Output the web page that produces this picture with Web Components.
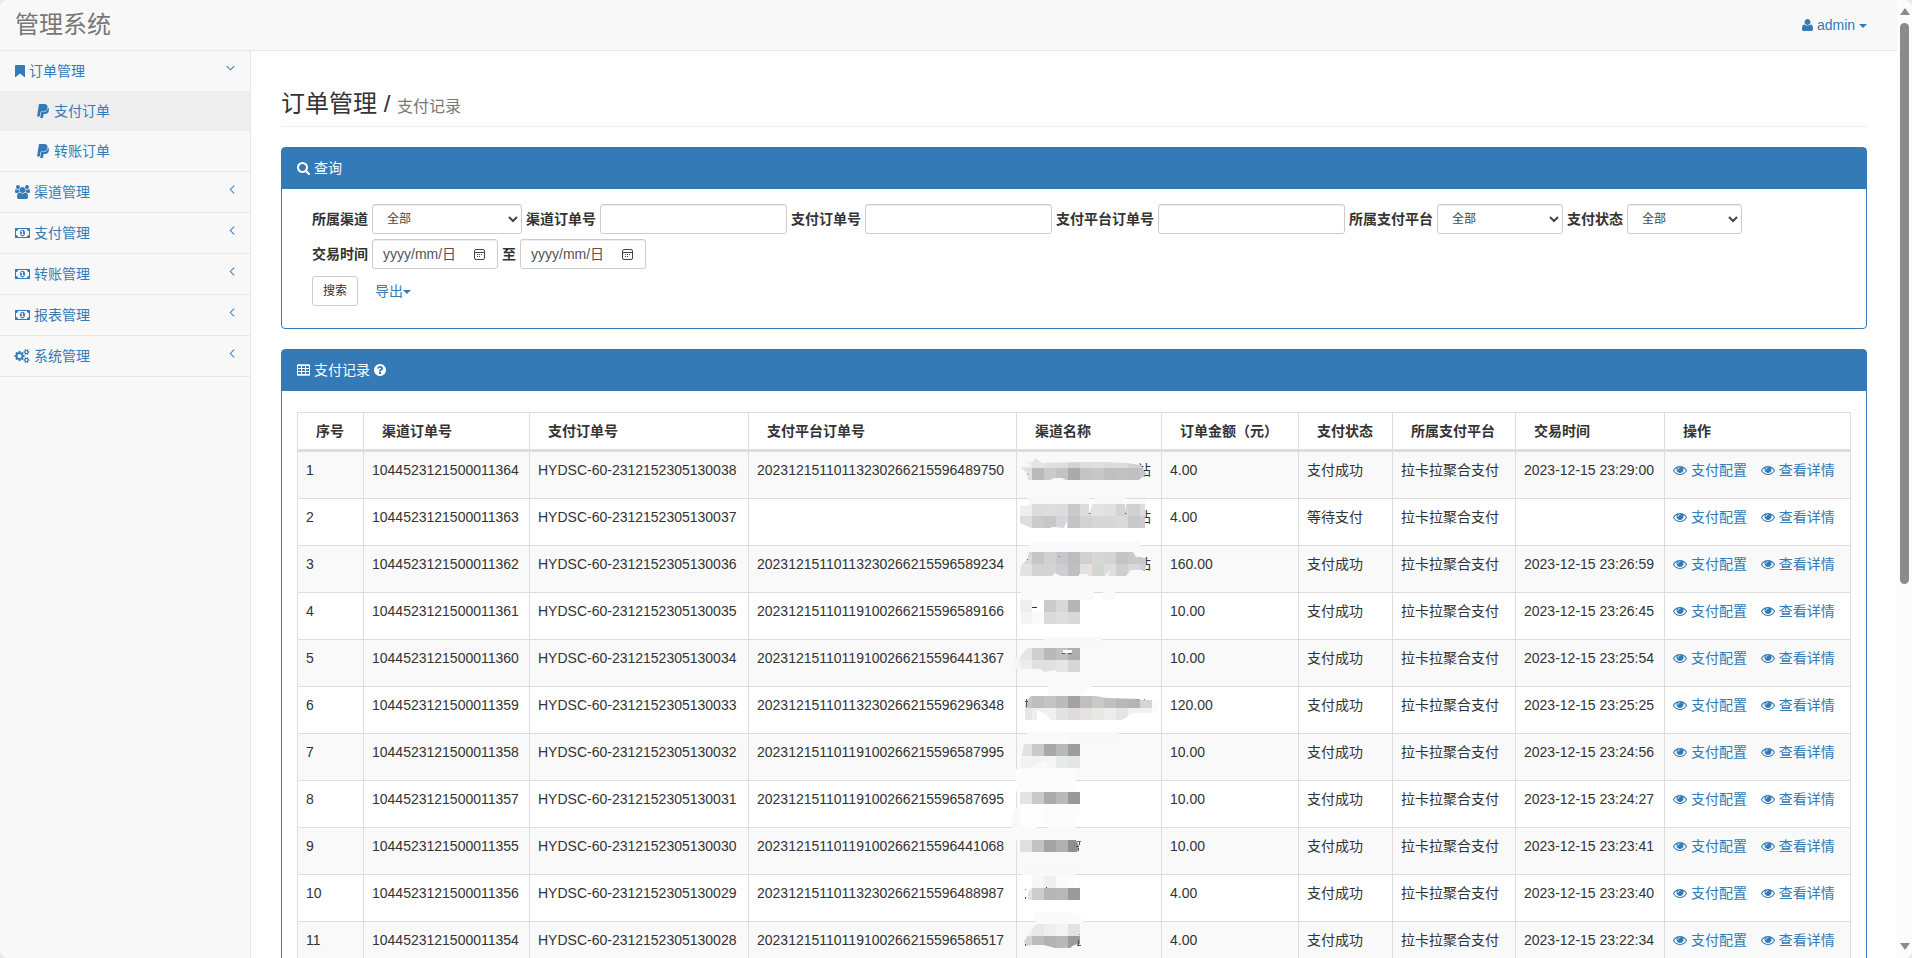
<!DOCTYPE html>
<html lang="zh-CN">
<head>
<meta charset="utf-8">
<title>管理系统</title>
<style>
html, body { margin: 0; height: 100%; }
body {
  background: #e9e9e9; color: #333;
  font: 14px/20px "Liberation Sans", "Noto Sans CJK SC", sans-serif;
}
</style>
</head>
<body>
<app-shell>
  <top-bar slot="top" brand="管理系统" user="admin"></top-bar>
  <side-nav slot="side"></side-nav>
  <page-heading section="订单管理" page="支付记录"></page-heading>
  <panel-box>
    <span slot="title"><fa-icon name="search"></fa-icon> 查询</span>
    <search-form></search-form>
  </panel-box>
  <panel-box>
    <span slot="title"><fa-icon name="table"></fa-icon> 支付记录 <fa-icon name="question"></fa-icon></span>
    <order-table></order-table>
  </panel-box>
  <scroll-rail slot="rail"></scroll-rail>
</app-shell>

<script>
const define = (name, render) => customElements.define(name, class extends HTMLElement {
  constructor() { super(); this.attachShadow({ mode: 'open' }); }
  connectedCallback() { this.shadowRoot.innerHTML = render(this); }
});

/* Icons: [width in units, path]; 1792 units are one 14px em. */
const ICONS = {
  bookmark: [1280, 'M0 256q0-80 80-128h1120q80 48 80 128v1380q0 60-90 40L640 1230 90 1676q-90 20-90-40z'],
  paypal: [1664, 'M1519 646q18 84-4 204-87 444-565 444h-44q-25 0-44 16.5t-24 42.5l-4 19-55 346-2 15q-5 26-24.5 42.5t-44.5 16.5h-251q-21 0-33-15t-9-36q9-56 26.5-168t26.5-168 27-167.5 27-167.5q5-37 43-37h131q133 2 236-21 175-39 287-144 102-95 155-246 24-70 35-133 1-6 2.5-7.5t3.5-1 6 3.500q79 59 98 162zm-172-282q0 107-46 236-80 233-302 315-113 40-252 42 0 1-90 1l-90-1q-100 0-118 96-2 8-85 530-1 10-12 10h-295q-22 0-36.5-16.5t-11.5-38.5l232-1471q5-29 27.5-48t51.5-19h598q34 0 97.5 13t111.5 32q107 41 163.5 123t56.5 196z'],
  users: [1920, 'M593 896q-162 5-265 128h-134q-82 0-138-40.5t-56-118.5q0-353 124-353 6 0 43.5 21t97.5 42.5 119 21.5q67 0 133-23-5 37-5 66 0 139 81 256zm1071 637q0 120-73 189.5t-194 69.5h-874q-121 0-194-69.5t-73-189.5q0-53 3.5-103.5t14-109 26.5-108.5 43-97.5 62-81 85.5-53.5 111.5-20q10 0 43 21.5t73 48 107 48 135 21.5 135-21.5 107-48 73-48 43-21.5q61 0 111.5 20t85.5 53.5 62 81 43 97.5 26.5 108.5 14 109 3.5 103.5zm-1024-1277q0 106-75 181t-181 75-181-75-75-181 75-181 181-75 181 75 75 181zm704 384q0 159-112.5 271.5t-271.5 112.5-271.5-112.5-112.5-271.5 112.5-271.5 271.5-112.5 271.5 112.5 112.5 271.5zm576 225q0 78-56 118.5t-138 40.5h-134q-103-123-265-128 81-117 81-256 0-29-5-66 66 23 133 23 59 0 119-21.5t97.5-42.5 43.5-21q124 0 124 353zm-128-609q0 106-75 181t-181 75-181-75-75-181 75-181 181-75 181 75 75 181z'],
  money: [1920, 'M768 1152h384v-96h-128v-448h-114l-148 137 77 80q42-37 55-57h2v288h-128v96zm512-256q0 70-21 142t-59.5 134-101.5 101-138 39-138-39-101.5-101-59.5-134-21-142 21-142 59.5-134 101.5-101 138-39 138 39 101.5 101 59.5 134 21 142zm512 256v-512q-106 0-181-75t-75-181h-1152q0 106-75 181t-181 75v512q106 0 181 75t75 181h1152q0-106 75-181t181-75zm128-832v1152q0 26-19 45t-45 19h-1792q-26 0-45-19t-19-45v-1152q0-26 19-45t45-19h1792q26 0 45 19t19 45z'],
  cogs: [1920, 'M832 896q0-106-75-181t-181-75-181 75-75 181 75 181 181 75 181-75 75-181zm768 512q0-52-38-90t-90-38-90 38-38 90q0 53 37.5 90.5t90.5 37.5 90.5-37.5 37.5-90.5zm0-1024q0-52-38-90t-90-38-90 38-38 90q0 53 37.5 90.5t90.5 37.5 90.5-37.5 37.5-90.5zm-384 421v185q0 10-7 19.5t-16 10.5l-155 24q-11 35-32 76 34 48 90 115 7 11 7 20 0 12-7 19-23 30-82.5 89.5t-78.5 59.5q-11 0-21-7l-115-90q-37 19-77 31-11 108-23 155-7 24-30 24h-186q-11 0-20-7.5t-10-17.5l-23-153q-34-10-75-31l-118 89q-7 7-20 7-11 0-21-8-144-133-144-160 0-9 7-19 10-14 41-53t47-61q-23-44-35-82l-152-24q-10-1-17-9.5t-7-19.5v-185q0-10 7-19.5t16-10.5l155-24q11-35 32-76-34-48-90-115-7-11-7-20 0-12 7-20 22-30 82-89t79-59q11 0 21 7l115 90q34-18 77-32 11-108 23-154 7-24 30-24h186q11 0 20 7.5t10 17.5l23 153q34 10 75 31l118-89q8-7 20-7 11 0 21 8 144 133 144 160 0 8-7 19-12 16-42 54t-45 60q23 48 34 82l152 23q10 2 17 10.5t7 19.5zm640 533v140q0 16-149 31-12 27-30 52 51 113 51 138 0 4-4 7-122 71-124 71-8 0-46-47t-52-68q-20 2-30 2t-30-2q-14 21-52 68t-46 47q-2 0-124-71-4-3-4-7 0-25 51-138-18-25-30-52-149-15-149-31v-140q0-16 149-31 13-29 30-52-51-113-51-138 0-4 4-7 4-2 35-20t59-34 30-16q8 0 46 46.5t52 67.5q20-2 30-2t30 2q51-71 92-112l6-2q4 0 124 70 4 3 4 7 0 25-51 138 17 23 30 52 149 15 149 31zm0-1024v140q0 16-149 31-12 27-30 52 51 113 51 138 0 4-4 7-122 71-124 71-8 0-46-47t-52-68q-20 2-30 2t-30-2q-14 21-52 68t-46 47q-2 0-124-71-4-3-4-7 0-25 51-138-18-25-30-52-149-15-149-31v-140q0-16 149-31 13-29 30-52-51-113-51-138 0-4 4-7 4-2 35-20t59-34 30-16q8 0 46 46.5t52 67.5q20-2 30-2t30 2q51-71 92-112l6-2q4 0 124 70 4 3 4 7 0 25-51 138 17 23 30 52 149 15 149 31z'],
  search: [1664, 'M1152 832q0-185-131.5-316.5t-316.5-131.5-316.5 131.5-131.5 316.5 131.5 316.5 316.5 131.5 316.5-131.5 131.5-316.5zm512 832q0 52-38 90t-90 38q-54 0-90-38l-343-342q-179 124-399 124-143 0-273.5-55.5t-225-150-150-225-55.5-273.5 55.5-273.5 150-225 225-150 273.5-55.5 273.5 55.5 225 150 150 225 55.5 273.5q0 220-124 399l343 343q37 37 37 90z'],
  table: [1664, 'M0 256q0-90 90-90h1484q90 0 90 90v1280q0 90-90 90H90q-90 0-90-90zM128 384v256h384V384zM640 384v256h384V384zM1152 384v256h384V384zM128 768v256h384V768zM640 768v256h384V768zM1152 768v256h384V768zM128 1152v256h384v-256zM640 1152v256h384v-256zM1152 1152v256h384v-256z'],
  question: [1536, 'M896 1376v-192q0-14-9-23t-23-9h-192q-14 0-23 9t-9 23v192q0 14 9 23t23 9h192q14 0 23-9t9-23zm256-672q0-88-55.5-163t-138.5-116-170-41q-243 0-371 213-15 24 8 42l132 100q7 6 19 6 16 0 25-12 53-68 86-92 34-24 86-24 48 0 85.5 26t37.5 59q0 38-20 61t-68 45q-63 28-115.5 86.5t-52.5 125.5v36q0 14 9 23t23 9h192q14 0 23-9t9-23q0-19 21.5-49.5t54.5-49.5q32-18 49-28.5t46-35 44.5-48 28-60.5 12.5-81zm384 192q0 209-103 385.5t-279.5 279.5-385.5 103-385.5-103-279.5-279.5-103-385.5 103-385.5 279.5-279.5 385.5-103 385.5 103 279.5 279.5 103 385.5z'],
  user: [1408, 'M1408 1399q0 109-62.5 187t-150.5 78h-982q-88 0-150.5-78t-62.5-187q0-85 8.5-160.5t31.5-152 58.5-131 94-89 134.5-34.5q131 128 377 128t377-128q76 0 134.5 34.5t94 89 58.5 131 31.5 152 8.500 160.5zM1088 512q0 159-112.5 271.5t-271.5 112.5-271.5-112.5-112.5-271.5 112.5-271.5 271.5-112.5 271.5 112.5 112.5 271.5z'],
  eye: [1792, 'M1664 960q-152-236-381-353 61 104 61 225 0 185-131.5 316.5t-316.5 131.5-316.5-131.5-131.5-316.5q0-121 61-225-229 117-381 353 133 205 333.5 326.5t434.5 121.5 434.5-121.5 333.5-326.5zm-720-384q0-20-14-34t-34-14q-125 0-214.5 89.5t-89.5 214.5q0 20 14 34t34 14 34-14 14-34q0-86 61-147t147-61q20 0 34-14t14-34zm848 384q0 34-20 69-140 230-376.5 368.5t-499.5 138.5-499.5-139-376.5-368q-20-35-20-69t20-69q140-229 376.5-368t499.5-139 499.5 139 376.5 368q20 35 20 69z'],
  left: [1152, 'M1090 500L620 960l470 460-85 85L460 960 1005 415z'],
  down: [1152, 'M1100 700L576 1230 52 700l90-90 434 440 434-440z'],
};

define('fa-icon', el => {
  const [w, d] = ICONS[el.getAttribute('name')];
  return `<style>
    :host { display: inline-block; height: 14px; line-height: 0; vertical-align: -2px; }
    svg { display: block; height: 14px; fill: currentColor; fill-rule: evenodd; overflow: visible; }
    .solid { fill-rule: nonzero; }
  </style><svg width="${w / 128}" viewBox="0 0 ${w} 1792" aria-hidden="true"${el.getAttribute('name') === 'user' ? ' class="solid"' : ''}><path d="${d}"/></svg>`;
});

define('app-shell', () => `<style>
  :host { display: grid; grid-template: auto minmax(0, 1fr) / 251px minmax(0, 1fr) 15px;
    height: 100vh; overflow: hidden; background: #f8f8f8; border-radius: 8px; }
  .top { grid-column: 1 / 3; }
  .rail { grid-column: 3; grid-row: 1 / 3; }
  nav { border-right: 1px solid #e7e7e7; }
  main { background: #fff; padding: 0 30px; overflow: hidden; }
</style>
<header class="top"><slot name="top"></slot></header>
<nav><slot name="side"></slot></nav>
<main><slot></slot></main>
<div class="rail"><slot name="rail"></slot></div>`);

define('top-bar', el => `<style>
  :host { display: flex; justify-content: space-between; align-items: flex-start; height: 50px;
    padding: 0 30px 0 15px; border-bottom: 1px solid #e7e7e7; background: #f8f8f8; }
  a { text-decoration: none; color: #337ab7; padding: 15px 0; }
  .brand { color: #777; font-size: 24px; line-height: 20px; }
  .caret { display: inline-block; border: 4px solid transparent; border-top-color: currentColor; border-bottom: 0; vertical-align: middle; }
</style>
<a class="brand" href="#">${el.getAttribute('brand')}</a>
<a href="#"><fa-icon name="user"></fa-icon> ${el.getAttribute('user')} <span class="caret"></span></a>`);

define('nav-item', el => {
  const level = el.getAttribute('level');
  const arrow = el.getAttribute('arrow');
  return `<style>
    :host { display: block; }
    a { display: flex; gap: 4px; padding: 10px 15px; color: #337ab7; text-decoration: none; }
    a.sub { padding-left: 37px; }
    a.active { background: #eee; }
    .icon { display: flex; align-items: center; }
    .arrow { margin-left: auto; line-height: 14px; }
  </style>
  <a href="#" class="${level === '2' ? 'sub' : ''} ${el.hasAttribute('active') ? 'active' : ''}">
    <span class="icon"><fa-icon name="${el.getAttribute('icon')}"></fa-icon></span><slot></slot>
    ${arrow ? `<span class="arrow"><fa-icon name="${arrow}"></fa-icon></span>` : ''}
  </a>`;
});

define('side-nav', () => `<style>
  :host { display: block; }
  ul { list-style: none; margin: 0; padding: 0; }
  .top > li { border-bottom: 1px solid #e7e7e7; }
</style>
<ul class="top">
  <li><nav-item icon="bookmark" arrow="down">订单管理</nav-item>
    <ul>
      <li><nav-item icon="paypal" level="2" active>支付订单</nav-item></li>
      <li><nav-item icon="paypal" level="2">转账订单</nav-item></li>
    </ul></li>
  <li><nav-item icon="users" arrow="left">渠道管理</nav-item></li>
  <li><nav-item icon="money" arrow="left">支付管理</nav-item></li>
  <li><nav-item icon="money" arrow="left">转账管理</nav-item></li>
  <li><nav-item icon="money" arrow="left">报表管理</nav-item></li>
  <li><nav-item icon="cogs" arrow="left">系统管理</nav-item></li>
</ul>`);

define('page-heading', el => `<style>
  :host { display: block; }
  h1 { margin: 40px 0 20px; padding-bottom: 9px; border-bottom: 1px solid #eee;
    font-size: 24px; line-height: 26px; font-weight: 400; }
  small { font-size: 16px; line-height: 16px; color: #777; }
</style><h1>${el.getAttribute('section')} / <small>${el.getAttribute('page')}</small></h1>`);

define('panel-box', () => `<style>
  :host { display: block; margin-bottom: 20px; border: 1px solid #337ab7; border-radius: 4px; background: #fff; }
  header { padding: 10px 15px 11px; background: #337ab7; color: #fff; }
  .body { padding: 15px; }
</style><header><slot name="title"></slot></header><div class="body"><slot></slot></div>`);

define('search-form', () => `<style>
  :host { display: block; }
  form { padding: 0 15px 7px; }
  .row { display: flex; flex-wrap: wrap; align-items: center; gap: 4px; margin-bottom: 5px; }
  .actions { gap: 17px; margin: 7px 0 0; }
  label { font-weight: 700; }
  input, select, button { box-sizing: border-box; height: 30px; margin: 0; padding: 5px 10px; font: inherit;
    font-size: 12px; line-height: 18px; color: #555; background: #fff; border: 1px solid #ccc; border-radius: 3px; }
  input, select { box-shadow: inset 0 1px 1px rgba(0, 0, 0, .075); }
  input { width: 187px; }
  select { color: #444; }
  .channel { width: 150px; } .platform { width: 126px; } .state { width: 115px; }
  .date { position: relative; display: flex; }
  .date input { width: 126px; font-size: 14px; }
  .date input::placeholder { color: #555; opacity: 1; }
  .date svg { position: absolute; right: 13px; top: 10px; }
  button { color: #333; }
  a { color: #337ab7; text-decoration: none; }
  .caret { display: inline-block; border: 4px solid transparent; border-top-color: currentColor; border-bottom: 0; vertical-align: middle; }
</style>
<form>
  <div class="row">
    <label for="channel">所属渠道</label><select id="channel" class="channel"><option>全部</option></select>
    <label for="channelNo">渠道订单号</label><input id="channelNo" type="text">
    <label for="payNo">支付订单号</label><input id="payNo" type="text">
    <label for="platformNo">支付平台订单号</label><input id="platformNo" type="text">
    <label for="platform">所属支付平台</label><select id="platform" class="platform"><option>全部</option></select>
    <label for="state">支付状态</label><select id="state" class="state"><option>全部</option></select>
  </div>
  <div class="row">
    ${[['from', '交易时间'], ['to', '至']].map(([id, text]) => `<label for="${id}">${text}</label>
    <span class="date"><input id="${id}" type="text" placeholder="yyyy/mm/日">
      <svg width="11" height="11" viewBox="0 0 11 11" fill="none" stroke="#444" aria-hidden="true"><rect x=".5" y=".5" width="10" height="10" rx="1.500"/><path d="M1 3.500h9"/><path d="M3 5.500h1m1 0h1m1 0h1M3 7.500h1m1 0h1"/></svg></span>`).join('')}
  </div>
  <div class="row actions"><button type="button">搜索</button><a href="#">导出<span class="caret"></span></a></div>
</form>`);

/* Pixelated cover over a channel name. Coordinates are relative to the cell;
   each band is [x, y, height, colours], one 12px block per colour. */
const MASKS = [
  { clip: '3,15 14,14 9,9 16,10 18,6 24,10 26,11 66,10 88,10 110,11 124,13 128,20 130,22 124,26 122,28 49,28 45,26 37,26 33,28 11,28 11,22',
    bands: [[3, 6, 10, '#ededed #e4e4e4 #e0e0df #dcdddd #d2d2d3 #dedede #e0e0e0 #dcdcdc #dcdcdc #d0d2d3 #d2d2d2'], [3, 16, 12, '#e0e0e0 #bababa #c9cacc #c4c2c2 #a9aaac #c3c4c6 #c5c8c6 #bebfbf #c0c1c3 #c0c0c2 #c4c4c4']], dots: [[10, 22, '#777']] },
  { clip: '11,-1 72,-1 72,15 78,-1 108,-1 108,13 110,0 128,0 128,29 50,29 50,22 47,29 36,28 33,29 14,29 3,24 3,7 13,6',
    bands: [[3, -1, 6, '#f8f8f8 #f8f8f8 #f8f8f8 #f8f8f8 #f8f8f8 #f8f8f8 #f8f8f8 #f8f8f8 #f8f8f8 #f8f8f8 #f8f8f8'], [3, 5, 12, '#eee #dcdcdc #dfdddc #dadcdf #c9c9c9 #dcdcdc #e3e3e3 #dde1e3 #d4d4d4 #cfd2d2 #ddd'], [3, 17, 12, '#dedede #c9cbcd #c9c7c6 #d6d6d8 #c3c4c6 #d2d4d2 #d6d8d6 #d6d8d6 #dadada #c9c9cb #ccc']], dots: [[72, 14, '#444'], [108, 14, '#444']] },
  { clip: '13,-5 77,-5 77,1 78,-5 124,-5 121,6 116,6 119,11 129,12 129,24 114,24 109,30 91,30 93,24 88,30 72,30 71,28 62,28 62,30 44,30 38,27 35,30 3,30 4,20 11,12',
    bands: [[3, -5, 11, '#fafafa #fafafa #fafafa #fafafa #fafafa #fafafa #fafafa #fafafa #fafafa #fafafa #fafafa'], [3, 6, 12, '#d9d9d9 #c6c6c8 #d2d1cf #c5c8cb #bdbdbf #d3cfcf #d6d8d4 #d2d4d6 #c4c4c6 #c9c9cb #c6c8ca'], [3, 18, 12, '#e2e2e0 #d2d2d2 #d4d2d2 #ceced0 #bfbfc1 #e4e0e0 #d3d7d3 #dcdee0 #cfcfcf #d6d8da #cfcfd1']], dots: [[42, 10, '#46718f'], [10, 13, '#666']] },
  { clip: '5,-5 77,-5 77,7 63,7 63,31 4,31 3,7', bands: [[3, -5, 12, '#fafafa #fafafa #fafafa #fafafa #fafafa #fafafa #fafafa'], [3, 7, 12, '#efeeec #fff #c9cbce #d8d8d8 #b5b5b5'], [3, 19, 12, '#f4f4f4 #fafafa #dadada #dedee0 #d9d9d9']], dots: [[15, 14, '#333', 5], [86, -5, '#fafafa', 12, 12]] },
  { clip: '24,-3 86,-3 83,6 63,8 63,32 40,32 38,30 27,32 24,29 -4,29 -3,18 3,17 9,9', bands: [[27, -4, 12, '#f8f8f8 #f8f8f8 #f8f8f8 #f8f8f8 #f8f8f8'], [-9, 17, 12, '#f5f5f5'], [3, 8, 12, '#e6e6e4 #cfcfcf #b8b9bb #c0c0be #adafad'], [3, 20, 12, '#ededed #e0e0e0 #e0e2e2 #e6e6e6 #d4d8d6']], dots: [[46, 10, '#fafafa', 9, 3], [45, 13, '#555', 3], [51, 13, '#555', 4]] },
  { clip: '31,-2 76,-2 63,9 78,9 90,11 123,12 123,13 135,13 142,16 139,26 116,26 105,33 33,33 30,28 20,23 20,33 8,33 8,21 9,15 14,9 31,9', bands: [[27, -3, 12, '#fafafa #fafafa #fafafa #fafafa'], [3, 9, 12, '#c6c6c6 #bebebe #c6c4c2 #b8babc #a2a2a2 #c2bebe #c8cac8 #c0c0c2 #b8b8ba #b3b5b3 #d4d5d7 #fafafa'], [3, 21, 12, '#e6e6e6 #eee #eef1f0 #e2e2e2 #dcdcdc #e6e2e2 #e8e8e6 #ececec #e4e4e4 #f1f1f1 #f1f1f1 #fafafa']], dots: [[8, 14, '#555', 3], [9, 12, '#555', 1, 8], [120, 12, '#777'], [127, 12, '#777'], [81, 24, '#f3edab']] },
  { clip: '11,-2 102,-2 98,9 63,10 63,34 34,34 28,26 18,31 15,34 3,34 5,20 7,10', bands: [[3, -2, 12, '#fafafa #fafafa #fafafa #fafafa #f8f8f8 #f8f8f8 #f8f8f8 #f8f8f8 #f8f8f8'], [3, 10, 12, '#e2e2e0 #cbcac8 #a8a8aa #b8b9bb #9d9d9d'], [3, 22, 12, '#f2f2f2 #f2f2f2 #f5f5f5 #e8eaea #e4e6e4']], dots: [] },
  { clip: '-1,-12 59,-12 59,11 63,11 63,23 62,36 58,47 31,47 20,34 20,47 -6,47 -4,30 3,24 3,11 -1,10', bands: [[-9, -12, 23, '#fcfcfc #fcfcfc #fcfcfc #fcfcfc #fcfcfc #fcfcfc'], [3, 11, 12, '#e4e4e2 #cac9c7 #a9abad #b8b9bb #97989a'], [-9, 23, 24, '#f9f9f9 #fdfdfd #fdfdfd #fbfbfb #fbfbfb #fcfcfc']], dots: [] },
  { clip: '-3,0 3,0 3,12 59,12 62,18 60,24 3,24 -2,16', bands: [[-9, 0, 12, '#fafafa'], [3, 12, 12, '#dfdfdd #c4c2c1 #a1a3a5 #b0b0b0 #8f8f91']], dots: [[60, 13, '#57708a', 4], [62, 14, '#555', 1, 3], [59, 18, '#555', 3], [61, 20, '#555', 1, 3]] },
  { clip: '5,-11 59,-11 56,13 63,13 63,25 11,25 11,17 15,13 15,0 5,0', bands: [[3, -11, 12, '#f8f8f8 #f8f8f8 #f8f8f8 #f8f8f8 #f8f8f8'], [15, 1, 12, '#f7f7f7 #edf0f0 #fafafa #fcfcfc'], [3, 13, 12, '#e4e4e2 #cecdcc #b4b6b8 #b8b8b8 #9a9a9a']], dots: [[8, 14, '#777'], [8, 22, '#555', 1, 2], [29, 12, '#333']] },
  { clip: '16,-10 50,-10 68,-2 63,2 63,22 57,23 53,26 38,26 27,23 15,23 10,24 7,20 13,9 20,2', bands: [[15, -10, 12, '#fafafa #fafafa #fafafa #fafafa #fafafa'], [3, 2, 12, '#f0f0f0 #e8e8e8 #eee #f4f4f2 #e0e4e4'], [3, 14, 12, '#d4d4d4 #bcbcbc #b2b2b2 #b8b8b8 #9c9c9e']], dots: [[8, 22, '#555', 1, 2], [62, 12, '#7aa5d0'], [61, 18, '#456', 1, 5], [60, 23, '#555', 4]] },
];

define('masked-name', el => {
  const i = +el.getAttribute('row'), m = MASKS[i];
  const blocks = m.bands.map(([x, y, h, c]) => c.split(' ').map((f, n) =>
    `<rect x="${x + n * 12}" y="${y}" width="12" height="${h}" fill="${f}"/>`).join('')).join('');
  const dots = m.dots.map(([x, y, f, w = 1, h = 1]) => `<rect x="${x}" y="${y}" width="${w}" height="${h}" fill="${f}"/>`).join('');
  return `<style>
    :host { display: block; padding-left: 112px; height: 20px; }
    svg { position: absolute; left: 0; top: 0; overflow: visible; }
  </style><slot></slot><svg width="144" height="46" shape-rendering="crispEdges" aria-hidden="true">
  <clipPath id="c"><polygon points="${m.clip}"/></clipPath><g clip-path="url(#c)">${blocks}</g>${dots}</svg>`;
});

const ORDERS = [
  ['1044523121500011364', '38', '20231215110113230266215596489750', '4.00', '23:29:00'],
  ['1044523121500011363', '37', '', '4.00', ''],
  ['1044523121500011362', '36', '20231215110113230266215596589234', '160.00', '23:26:59'],
  ['1044523121500011361', '35', '20231215110119100266215596589166', '10.00', '23:26:45'],
  ['1044523121500011360', '34', '20231215110119100266215596441367', '10.00', '23:25:54'],
  ['1044523121500011359', '33', '20231215110113230266215596296348', '120.00', '23:25:25'],
  ['1044523121500011358', '32', '20231215110119100266215596587995', '10.00', '23:24:56'],
  ['1044523121500011357', '31', '20231215110119100266215596587695', '10.00', '23:24:27'],
  ['1044523121500011355', '30', '20231215110119100266215596441068', '10.00', '23:23:41'],
  ['1044523121500011356', '29', '20231215110113230266215596488987', '4.00', '23:23:40'],
  ['1044523121500011354', '28', '20231215110119100266215596586517', '4.00', '23:22:34'],
];

define('order-table', () => `<style>
  :host { display: block; padding-top: 6px; }
  table { width: 100%; table-layout: fixed; border-collapse: separate; border-spacing: 0;
    border: solid #ddd; border-width: 1px 0 0 1px; }
  th, td { position: relative; text-align: left; vertical-align: top; white-space: nowrap;
    border: solid #ddd; border-width: 0 1px 1px 0; }
  th { padding: 8px 0 8px 18px; border-bottom-width: 3px; }
  td { padding: 8px 0 18px 8px; }
  tbody tr:nth-child(odd) { background: #f9f9f9; }
  a { color: #337ab7; text-decoration: none; margin-right: 14px; }
</style>
<table>
  <colgroup>${[66, 166, 219, 268, 145, 137, 94, 123, 149].map(w => `<col style="width:${w}px">`).join('')}<col></colgroup>
  <thead><tr>${['序号', '渠道订单号', '支付订单号', '支付平台订单号', '渠道名称', '订单金额（元）', '支付状态', '所属支付平台', '交易时间', '操作'].map(t => `<th scope="col">${t}</th>`).join('')}</tr></thead>
  <tbody>${ORDERS.map(([no, pay, plat, sum, time], i) => `<tr>
    <td>${i + 1}</td><td>${no}</td><td>HYDSC-60-23121523051300${pay}</td><td>${plat}</td>
    <td><masked-name row="${i}">${i < 3 ? '站' : ''}</masked-name></td>
    <td>${sum}</td><td>${i === 1 ? '等待支付' : '支付成功'}</td><td>拉卡拉聚合支付</td>
    <td>${time ? '2023-12-15 ' + time : ''}</td>
    <td><a href="#"><fa-icon name="eye"></fa-icon> 支付配置</a><a href="#"><fa-icon name="eye"></fa-icon> 查看详情</a></td>
  </tr>`).join('')}</tbody>
</table>`);

define('scroll-rail', () => `<style>
  :host { display: flex; flex-direction: column; align-items: center; box-sizing: border-box; height: 100%;
    padding: 8px 0; background: #fcfcfc; }
  .up, .down { border: 5px solid transparent; }
  .up { border-top: 0; border-bottom: 7px solid #8b8b8b; }
  .down { border-bottom: 0; border-top: 7px solid #8b8b8b; }
  .track { flex: 1; margin: 8px 0; }
  .thumb { width: 9px; height: 61.5%; border-radius: 5px; background: #8b8b8b; }
</style><div class="up"></div><div class="track"><div class="thumb"></div></div><div class="down"></div>`);
</script>
</body>
</html>
